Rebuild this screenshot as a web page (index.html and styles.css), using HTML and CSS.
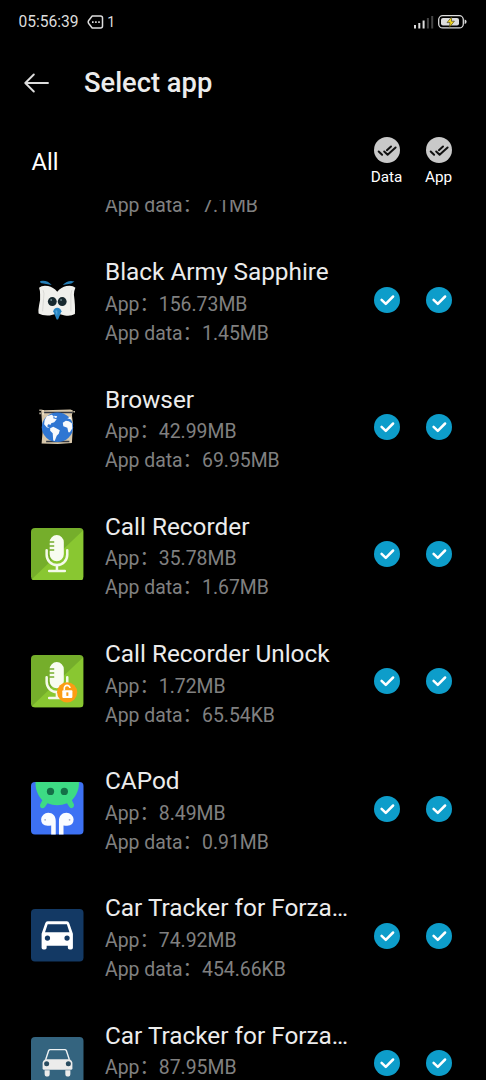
FILE: index.html
```html
<!DOCTYPE html>
<html lang="en">
<head>
  <meta charset="UTF-8">
  <title>Select app</title>
  <link rel="stylesheet" href="styles.css">
</head>
<body>
  <svg class="defs" width="0" height="0">
    <symbol id="check" viewBox="0 0 26 26">
      <circle cx="13" cy="13" r="13" fill="#0d9dca"/>
      <path d="M7.6 12.8l4.2 4.1 7.3-7.4" fill="none" stroke="#fff" stroke-width="2.5" stroke-linecap="round" stroke-linejoin="round"/>
    </symbol>
    <symbol id="check-all" viewBox="0 0 26 26">
      <circle cx="13" cy="13" r="13" fill="#c9c9c9"/>
      <path d="M4.7 14.5l3.4 3.2M10.2 14.5l3.4 3.2 8-7.2M12.9 13.2l4.1-3.7" fill="none" stroke="#111" stroke-width="2" stroke-linecap="round" stroke-linejoin="round"/>
    </symbol>
    <symbol id="mic" viewBox="0 0 52 52">
      <rect width="52" height="52" rx="4" fill="#75ae2b"/>
      <path d="M52 2v46a4 4 0 0 1-4 4H4a4 4 0 0 1-3-1.500z" fill="#89c731"/>
      <path d="M18.500 14a7 7 0 0 1 14 0v12a7 7 0 0 1-14 0v-3.500h4.500v-1.500h-4.500v-2.500h4.500v-1.500h-4.500v-2.500h4.500v-1.300h-4.500z" fill="#f8fcf0"/>
      <path d="M15.500 22v4.500a10.200 10.200 0 0 0 20.400 0V22M25.700 37v5M18 42.500h15.500" fill="none" stroke="#f4faea" stroke-width="2.500" stroke-linecap="round"/>
    </symbol>
  </svg>

  <div class="status-bar">
    <span class="time">05:56:39</span>
    <svg class="message-icon" width="17" height="14" viewBox="0 0 17 14">
      <path d="M5.200 1h8.300a2 2 0 0 1 2 2v8a2 2 0 0 1-2 2H5.200L1.700 8.500q-1-1.500 0-3z" fill="none" stroke="#ddd" stroke-width="1.500" stroke-linejoin="round"/>
      <path d="M5 6.300h1.600v1.600H5zM8.100 6.300h1.600v1.600H8.100zM11.200 6.300h1.600v1.600h-1.600z" fill="#ddd"/>
    </svg>
    <span class="count">1</span>
    <svg class="signal-icon" width="20" height="14" viewBox="0 0 20 14">
      <path d="M0 10h2v3.500H0zM4.300 8h2v5.500h-2zM8.600 5.500h2v8h-2z" fill="#ddd"/>
      <path d="M12.900 3h2v10.500h-2zM17.200 1h2v12.500h-2z" fill="#444"/>
    </svg>
    <svg class="battery-icon" width="29" height="14" viewBox="0 0 29 14">
      <rect x=".7" y=".7" width="24.600" height="12.200" rx="4" fill="none" stroke="#ddd" stroke-width="1.300"/>
      <path d="M26.600 4.500q2 .5 2 2.300t-2 2.300z" fill="#ddd"/>
      <rect x="3" y="3" width="18" height="7.600" rx="2" fill="#ddd"/>
      <path d="M13.700 1.800L9 7.600h3L11.400 12.200 16.400 6.200h-3z" fill="#f7dc22" stroke="#302c10" stroke-width=".6"/>
    </svg>
  </div>

  <div class="title-bar">
    <svg width="25" height="20" viewBox="0 0 25 20">
      <path d="M24 10H1.500M9.800 1.500L1.300 10l8.500 8.500" fill="none" stroke="#ddd" stroke-width="1.900" stroke-linecap="round" stroke-linejoin="round"/>
    </svg>
    <h1>Select app</h1>
  </div>

  <div class="select-all">
    <span class="all">All</span>
    <div class="column"><svg class="tick"><use href="#check-all"/></svg>Data</div>
    <div class="column"><svg class="tick"><use href="#check-all"/></svg>App</div>
  </div>

  <div class="app-list">
    <!-- scrolled row, only its last line is visible -->
    <div class="app cut">
      <div class="info">
        <p>App data：7.1MB</p>
      </div>
    </div>

    <div class="app">
      <svg class="icon" viewBox="0 0 52 52">
        <path d="M8 13.500Q11 11 17 12q5 1 9 5.500 4-4.500 9-5.500 6-1 9 1.500-1.500 3-1.500 7 1.500 11 1 19-4 2.500-10 1.500L26 39l-7.500 2q-7 .5-11-2-.5-3 .5-8 1.500-6 1-11 0-4-1-6.500z" fill="#f0f0ec"/>
        <path d="M12 16q1.500 3 .5 8l-1 13M40.500 16q-1.500 4-1 8v13" fill="none" stroke="#d6d6d3" stroke-width=".9"/>
        <path d="M9 7q7-1.500 11.500 4l-11-2zM31.500 11q5-5.500 11.500-3.500L40 9.500z" fill="#257eb7"/>
        <circle cx="21.100" cy="27.300" r="4.400" fill="#17282e"/><circle cx="30.900" cy="27.300" r="4.400" fill="#17282e"/>
        <circle cx="20" cy="25.800" r=".8" fill="#9fb8bd"/><circle cx="29.800" cy="25.800" r=".8" fill="#9fb8bd"/>
        <path d="M22 37q.8-3.500 4-3.500t4.200 3.500L26.800 45h-1.400z" fill="#2684c3"/>
        <path d="M24 36.500q2-1.500 2.200 1l-.4 4z" fill="#4fa6dc"/>
      </svg>
      <div class="info">
        <h2>Black Army Sapphire</h2>
        <p>App：156.73MB</p>
        <p>App data：1.45MB</p>
      </div>
      <svg class="tick"><use href="#check"/></svg>
      <svg class="tick"><use href="#check"/></svg>
    </div>

    <div class="app">
      <svg class="icon" viewBox="0 0 52 52">
        <path d="M10 8.500l3 .7 26-.7 2.500 1-1 4.500 1.200 9-1.200 18.500-14 1-16-.5 1-12-1-15z" fill="#d8c8ab"/>
        <path d="M9 8.500v6M12 9v6M42 10.500l3 .5" stroke="#f4e9cf" stroke-width="1.200" stroke-dasharray="1.500 1.500"/>
        <path d="M13 11.500h28M15 40h23" stroke="#343842" stroke-width="1.500"/>
        <ellipse cx="26.200" cy="26" rx="15.500" ry="14.700" fill="#2f76d2"/>
        <path d="M13.500 19l2-4 5-1.500 2 1.500-.5 2 3.500 1-2.500 3-3 1-.5 1.500-2.500-.5-1 2 2.500 2-3-1-2.500-3zM23 14.500l3 .5-1 2-2-1zM19 27l3-1.500 3 1.500 3.500 2-1 3.500-2 2-2 5-1.500-.5-.5-7-2.500-2.500z" fill="#f8fafc"/>
        <path d="M31.500 21.500l3-2 3 .5 3 2 .5 5-2.500 4-1.500 0-1-4.500-4-1.500zM36 17l3-1.500 1.500 3z" fill="#f8fafc"/>
      </svg>
      <div class="info">
        <h2>Browser</h2>
        <p>App：42.99MB</p>
        <p>App data：69.95MB</p>
      </div>
      <svg class="tick"><use href="#check"/></svg>
      <svg class="tick"><use href="#check"/></svg>
    </div>

    <div class="app">
      <svg class="icon"><use href="#mic"/></svg>
      <div class="info">
        <h2>Call Recorder</h2>
        <p>App：35.78MB</p>
        <p>App data：1.67MB</p>
      </div>
      <svg class="tick"><use href="#check"/></svg>
      <svg class="tick"><use href="#check"/></svg>
    </div>

    <div class="app">
      <svg class="icon" viewBox="0 0 52 52">
        <use href="#mic" width="52" height="52"/>
        <circle cx="35.800" cy="37" r="10" fill="#fb9d14"/>
        <rect x="31" y="35" width="10" height="7.500" rx=".8" fill="#fff"/>
        <path d="M33 35v-2a2.800 2.800 0 0 1 5.600-.3" fill="none" stroke="#fff" stroke-width="1.600"/>
        <path d="M36 37v3.500" stroke="#fb9d14" stroke-width="2"/>
      </svg>
      <div class="info">
        <h2>Call Recorder Unlock</h2>
        <p>App：1.72MB</p>
        <p>App data：65.54KB</p>
      </div>
      <svg class="tick"><use href="#check"/></svg>
      <svg class="tick"><use href="#check"/></svg>
    </div>

    <div class="app">
      <svg class="icon" viewBox="0 0 52 52">
        <rect width="52" height="52" rx="4" fill="#3d71f3"/>
        <path d="M4.500 0h43c.3 7-2 13-7 18l2.200 4.500q0 3-2.200 3.500-2 0-3-2l-1.800-3q-9.700 4-19.400 0L14 24.500q-1.500 2-3.500 1.500-2-1-1.500-3.500l2.200-4.500C6.500 13 4.200 7 4.500 0z" fill="#3ddb84"/>
        <circle cx="19.300" cy="9.300" r="3.600" fill="#147047"/><circle cx="33" cy="9.300" r="3.600" fill="#147047"/>
        <path d="M10 37a7 7 0 0 1 7-6.500c4.500 0 7.500 3 7.500 8V52H20v-9q-10 2-10-6zM42.200 37a7 7 0 0 0-7-6.500c-4.500 0-7.500 3-7.500 8V52h4.500v-9q10 2 10-6z" fill="#fafcff"/>
        <circle cx="14" cy="37.500" r=".9" fill="#a8acc8"/><circle cx="38.200" cy="37.500" r=".9" fill="#a8acc8"/>
      </svg>
      <div class="info">
        <h2>CAPod</h2>
        <p>App：8.49MB</p>
        <p>App data：0.91MB</p>
      </div>
      <svg class="tick"><use href="#check"/></svg>
      <svg class="tick"><use href="#check"/></svg>
    </div>

    <div class="app">
      <svg class="icon" viewBox="0 0 52 52">
        <rect width="52" height="52" rx="4" fill="#133964"/>
        <path fill-rule="evenodd" d="M16.500 12.200h19q1.800 0 2.400 1.800l3.600 10.500v14q0 1.700-1.700 1.700h-1.600q-1.700 0-1.700-1.700v-2H15.500v2q0 1.700-1.700 1.700h-1.600q-1.700 0-1.700-1.700v-14L14.100 14q.6-1.800 2.400-1.800zM16.500 15L13.900 23h24.200l-2.600-8z" fill="#fff"/>
        <circle cx="16.300" cy="28.800" r="2.600" fill="#133964"/><circle cx="35.700" cy="28.800" r="2.600" fill="#133964"/>
      </svg>
      <div class="info">
        <h2>Car Tracker for Forza…</h2>
        <p>App：74.92MB</p>
        <p>App data：454.66KB</p>
      </div>
      <svg class="tick"><use href="#check"/></svg>
      <svg class="tick"><use href="#check"/></svg>
    </div>

    <div class="app">
      <svg class="icon" viewBox="0 0 52 52">
        <rect width="52" height="52" rx="4" fill="#34647f"/>
        <path d="M14.500 22.500l3-9q.5-1 1.500-1h14.500q1 0 1.500 1l3 9" fill="none" stroke="#eef2f3" stroke-width="1.400"/>
        <path d="M14 22h24.500q2.500 1.500 2.500 3.500V31q0 1.500-1.500 1.500H13Q11.500 32.500 11.500 31v-5.500q0-2 2.500-3.500z" fill="#ececeb"/>
        <path d="M13.500 33h5v4q0 2-1.500 2h-2q-1.500 0-1.500-2zM34 33h5v4q0 2-1.500 2h-2q-1.500 0-1.500-2z" fill="#ececeb"/>
        <circle cx="15.500" cy="26.500" r="2.500" fill="#294c60"/><circle cx="37" cy="26.500" r="2.500" fill="#294c60"/>
      </svg>
      <div class="info">
        <h2>Car Tracker for Forza…</h2>
        <p>App：87.95MB</p>
      </div>
      <svg class="tick"><use href="#check"/></svg>
      <svg class="tick"><use href="#check"/></svg>
    </div>
  </div>
</body>
</html>
```

FILE: styles.css
```css
* {
  box-sizing: border-box;
}
body {
  margin: 0;
  height: 1080px;
  overflow: hidden;
  display: flex;
  flex-direction: column;
  background: #000;
  color: #ececec;
  font-family: Roboto, "Noto Sans CJK SC", sans-serif;
}
h1, h2, p {
  margin: 0;
}
svg {
  flex-shrink: 0;
}
.defs {
  display: none;
}
.status-bar {
  display: flex;
  align-items: center;
  height: 44px;
  padding: 0 19px 0 18.5px;
  font-size: 15.6px;
  color: #ddd;
}
.message-icon {
  margin: 0 3.5px 0 8px;
}
.count {
  font-size: 14px;
}
.signal-icon {
  margin-left: auto;
  margin-right: 4px;
}
.title-bar {
  display: flex;
  align-items: center;
  height: 77px;
  padding-left: 24px;
  gap: 35px;
}
h1 {
  font-size: 27.3px;
  font-weight: 500;
}
.select-all {
  display: flex;
  height: 79px;
  padding: 16px 21.5px 0 31.5px;
}
.all {
  flex: 1;
  font-size: 23.7px;
  line-height: 50px;
  color: #fff;
}
.column {
  display: flex;
  flex-direction: column;
  align-items: center;
  width: 52px;
  font-size: 15.3px;
  line-height: 28px;
  color: #fff;
}
.tick {
  width: 26px;
  height: 26px;
}
.app-list {
  flex: 1;
  overflow: hidden;
}
.app {
  display: flex;
  align-items: center;
  height: 127.2px;
  padding: 0 34.5px 0 31.2px;
}
.icon {
  width: 52.5px;
  height: 52.5px;
}
.info {
  flex: 1;
  min-width: 0;
  align-self: flex-start;
  padding-top: 19.2px;
  margin-left: 21.3px;
  margin-right: 22px;
}
h2 {
  font-size: 24.35px;
  font-weight: 400;
  line-height: 34.6px;
  white-space: nowrap;
}
p {
  font-size: 19.4px;
  line-height: 29px;
  color: #808080;
}
.tick + .tick {
  margin-left: 26px;
}
.cut {
  height: 36.2px;
}
.cut .info {
  margin-left: 73.8px;
  margin-top: -9px;
  padding: 0;
}
```
